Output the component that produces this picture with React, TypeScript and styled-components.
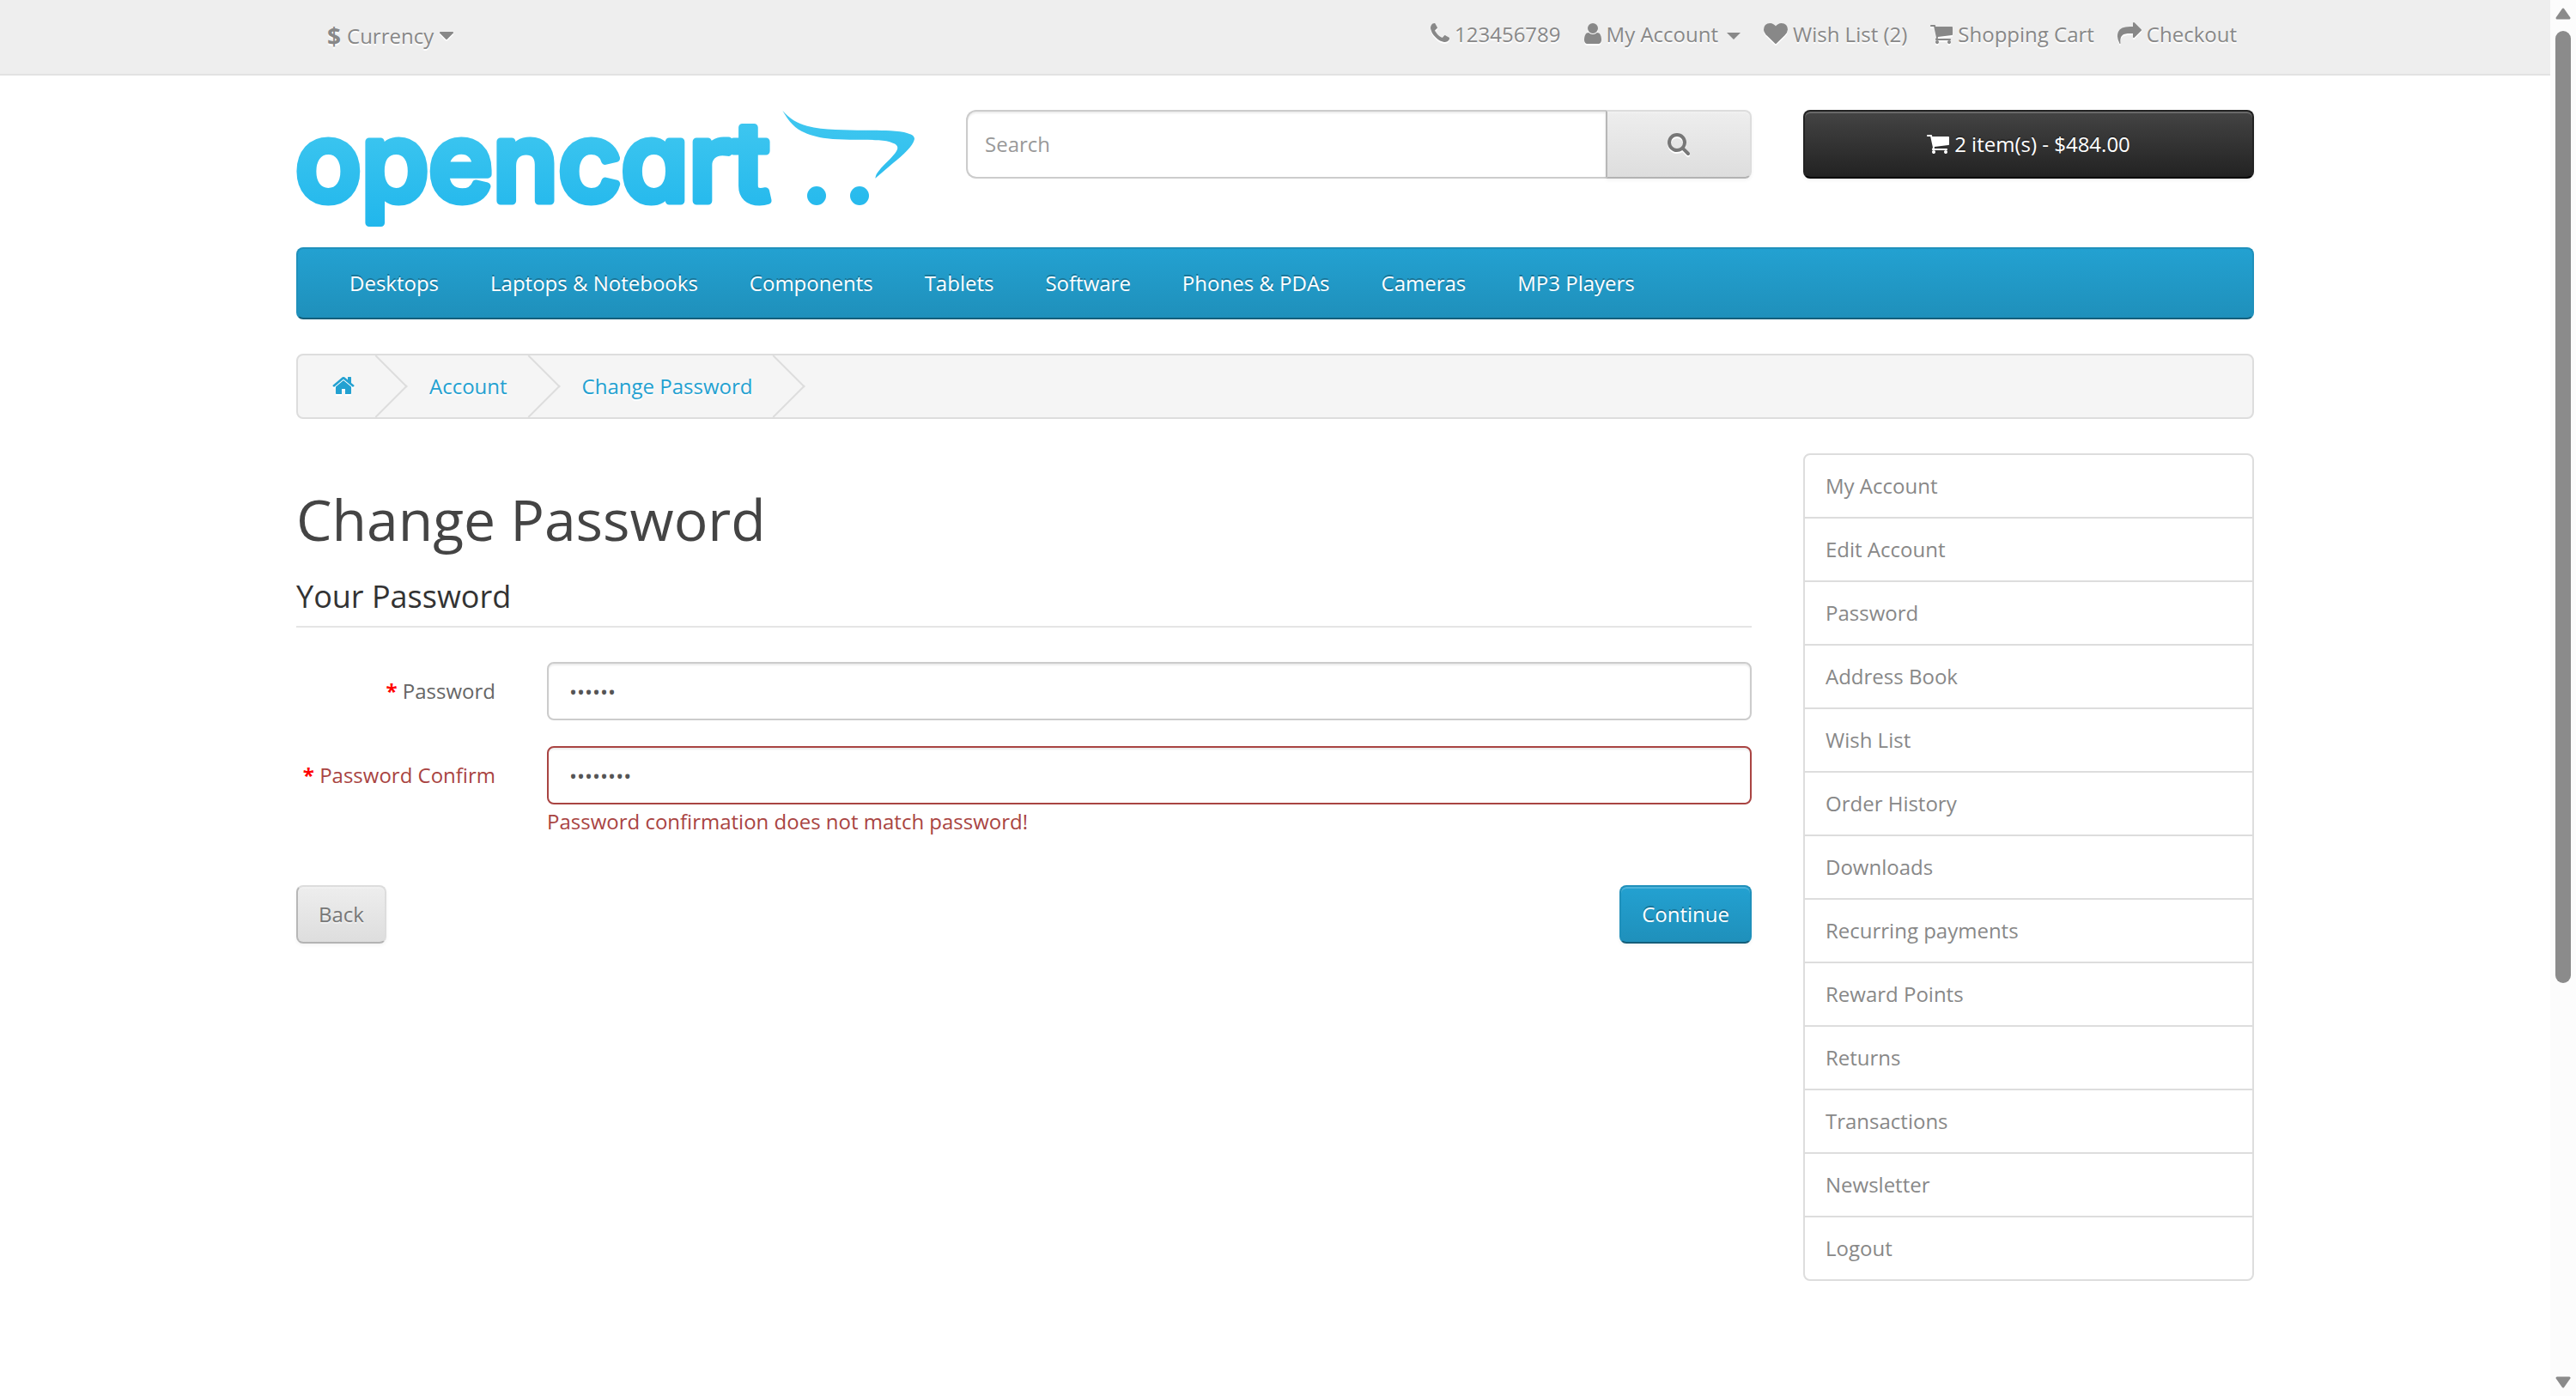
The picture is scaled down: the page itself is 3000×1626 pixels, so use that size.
import React from "react";
import styled, { createGlobalStyle, css } from "styled-components";

const GlobalStyle = createGlobalStyle`
  *, *::before, *::after { box-sizing: border-box; }
  html { background: #fff; }
  body {
    margin: 0;
    font-family: "Open Sans", "Noto Sans", sans-serif;
    font-size: 24px;
    line-height: 40px;
    color: #666;
    background: #fff;
  }
  a { color: inherit; text-decoration: none; }
  ul, ol { list-style: none; margin: 0; padding: 0; }
  button, input { font: inherit; margin: 0; }
`;

/* ---------- icons ---------- */

type Glyph = { x: number; w: number; d: string };

const glyphs: Record<string, Glyph> = {
  phone: {
    x: 192,
    w: 1408,
    d: "M1600 1240q0 27-10 70.5t-21 68.5q-21 50-122 106-94 51-186 51-27 0-52.5-3.5t-57.5-12.5-47.5-14.5-55.5-20.5-49-18q-98-35-175-83-128-79-264.5-215.5t-215.5-264.5q-48-77-83-175-3-9-18-49t-20.5-55.5-14.5-47.5-12.5-57.5-3.5-52.5q0-92 51-186 56-101 106-122 25-11 68.5-21t70.5-10q14 0 21 3 18 6 53 76 11 19 30 54t35 63.5 31 53.5q3 4 17.5 25t21.5 35.5 7 28.5q0 20-28.5 50t-62 55-62 53-28.5 46q0 9 5 22.5t8.5 20.5 14 24 11.5 19q76 137 174 235t235 174q2 1 19 11.5t24 14 20.5 8.5 22.5 5q18 0 46-28.5t53-62 55-62 50-28.5q14 0 28.5 7t35.5 21.5 25 17.5q25 15 53.5 31t63.5 35 54 30q70 35 76 53 3 7 3 21z",
  },
  user: {
    x: 256,
    w: 1280,
    d: "M1536 1399q0 109-62.5 187t-150.5 78h-854q-88 0-150.5-78t-62.5-187q0-85 8.5-160.5t31.5-152 58.5-131 94-89 134.5-34.5q131 128 313 128t313-128q76 0 134.5 34.5t94 89 58.5 131 31.5 152 8.5 160.5zm-256-887q0 159-112.5 271.5t-271.5 112.5-271.5-112.5-112.5-271.5 112.5-271.5 271.5-112.5 271.5 112.5 112.5 271.5z",
  },
  heart: {
    x: 0,
    w: 1792,
    d: "M896 1664q-26 0-44-18l-624-602q-10-8-27.5-26t-55.5-65.5-68-97.5-53.5-121-23.5-138q0-220 127-344t351-124q62 0 126.5 21.5t120 58 95.5 68.5 76 68q36-36 76-68t95.5-68.5 120-58 126.5-21.5q224 0 351 124t127 344q0 221-229 450l-623 600q-18 18-44 18z",
  },
  cart: {
    x: 64,
    w: 1664,
    d: "M704 1536q0 52-38 90t-90 38-90-38-38-90 38-90 90-38 90 38 38 90zm896 0q0 52-38 90t-90 38-90-38-38-90 38-90 90-38 90 38 38 90zm128-1088v512q0 24-16.5 42.5t-40.5 21.5l-1044 122q13 60 13 70 0 16-24 64h920q26 0 45 19t19 45-19 45-45 19h-1024q-26 0-45-19t-19-45q0-11 8-31.5t16-36 21.5-40 15.5-29.5l-177-823h-204q-26 0-45-19t-19-45 19-45 45-19h256q16 0 28.5 6.5t19.5 15.5 13 24.5 8 26 5.5 29.5 4.5 26h1201q26 0 45 19t19 45z",
  },
  share: {
    x: 0,
    w: 1792,
    d: "M1792 640q0 26-19 45l-512 512q-19 19-45 19t-45-19-19-45v-256h-224q-98 0-175.5 6t-154 21.5-133 42.5-105.5 69.5-80 101-48.5 138.5-17.5 181q0 55 5 123 0 6 2.5 23.5t2.5 26.5q0 15-8.5 25t-23.5 10q-16 0-28-17-7-9-13-22t-13.5-30-10.5-24q-127-285-127-451 0-199 53-333 162-403 875-403h224v-256q0-26 19-45t45-19 45 19l512 512q19 19 19 45z",
  },
  search: {
    x: 64,
    w: 1664,
    d: "M1216 832q0-185-131.5-316.5t-316.5-131.5-316.5 131.5-131.5 316.5 131.5 316.5 316.5 131.5 316.5-131.5 131.5-316.5zm512 832q0 52-38 90t-90 38q-54 0-90-38l-343-342q-179 124-399 124-143 0-273.5-55.5t-225-150-150-225-55.5-273.5 55.5-273.5 150-225 225-150 273.5-55.5 273.5 55.5 225 150 150 225 55.5 273.5q0 220-124 399l343 343q37 37 37 90z",
  },
  home: {
    x: 64,
    w: 1664,
    d: "M1472 992v480q0 26-19 45t-45 19h-384v-384h-256v384h-384q-26 0-45-19t-19-45v-480q0-1 .5-3t.5-3l575-474 575 474q1 2 1 6zm223-69l-62 74q-8 9-21 11h-3q-13 0-21-7l-692-577-692 577q-12 8-24 7-13-2-21-11l-62-74q-8-10-7-23.5t11-21.5l719-599q32-26 76-26t76 26l244 204v-195q0-14 9-23t23-9h192q14 0 23 9t9 23v408l219 182q10 8 11 21.5t-7 23.5z",
  },
  caret: {
    x: 384,
    w: 1024,
    d: "M1408 704q0 26-19 45l-448 448q-19 19-45 19t-45-19l-448-448q-19-19-19-45t19-45 45-19h896q26 0 45 19t19 45z",
  },
};

const IconSvg = styled.svg<{ $light?: boolean }>`
  flex: none;
  height: 28px;
  margin-bottom: 2px;
  fill: currentColor;
  overflow: visible;
  filter: ${(p) => (p.$light ? "drop-shadow(0 2px 0 #fff)" : "none")};
`;

function Icon({ name, light }: { name: string; light?: boolean }) {
  const g = glyphs[name];
  return (
    <IconSvg $light={light} viewBox={`${g.x} 0 ${g.w} 1792`} aria-hidden="true">
      <path d={g.d} />
    </IconSvg>
  );
}

/* ---------- layout ---------- */

const Container = styled.div`
  width: 100%;
  max-width: 2340px;
  margin: 0 auto;
  padding: 0 30px;
`;

const Window = styled.div`
  display: grid;
  grid-template-columns: minmax(0, 1fr) 30px;
  height: 100vh;
  overflow: hidden;
`;

const Page = styled.div`
  min-width: 0;
  overflow: hidden;
`;

/* ---------- scrollbar ---------- */

const Track = styled.div`
  display: flex;
  flex-direction: column;
  align-items: center;
  gap: 13px;
  padding: 9px 0;
  background: #fcfcfc;
`;

const Thumb = styled.div`
  flex: 1108 0 0;
  width: 18px;
  border-radius: 9px;
  background: #8b8b8b;
`;

const TrackRest = styled.div`
  flex: 431 0 0;
`;

const Arrow = styled.svg`
  flex: none;
  width: 18px;
  height: 14px;
  fill: #8b8b8b;
  stroke: #8b8b8b;
  stroke-width: 3;
  stroke-linejoin: round;
`;

/* ---------- top bar ---------- */

const TopBar = styled.nav`
  margin-bottom: 40px;
  background: #eee;
  border-bottom: 2px solid #e2e2e2;
  color: #888;
  text-shadow: 0 2px 0 #fff;
`;

const TopInner = styled(Container)`
  display: flex;
  justify-content: space-between;
  height: 86px;
`;

const CurrencyButton = styled.button`
  display: flex;
  align-items: center;
  gap: 7px;
  height: 84px;
  padding: 0 36px;
  border: 0;
  background: none;
  color: inherit;
  text-shadow: inherit;

  strong { font-size: 28px; }
`;

const TopLinks = styled.ul`
  display: flex;
  align-items: center;
  gap: 27px;
  height: 80px;
  padding-right: 20px;
`;

const TopLink = styled.a`
  display: flex;
  align-items: center;
  gap: 6px;
`;

const Caret = styled.span`
  width: 16px;
  height: 8px;
  margin: 4px 0 0 4px;
  border: 8px solid transparent;
  border-top-color: currentColor;
  border-bottom: 0;
`;

/* ---------- header ---------- */

const Header = styled(Container)`
  display: grid;
  grid-template-columns: 720fr 915fr 525fr;
  column-gap: 60px;
  align-items: start;
`;

const Logo = styled.svg`
  display: block;
  width: 100%;
  margin-bottom: 20px;
  overflow: visible;
`;

const Wordmark = styled.text`
  font-family: "Inter", "Open Sans", sans-serif;
  font-size: 127px;
  font-weight: 500;
  font-feature-settings: "cv11";
  stroke-width: 9px;
  stroke-linejoin: round;
`;

const SearchForm = styled.form`
  display: flex;
  height: 80px;
`;

const SearchInput = styled.input`
  flex: 1;
  min-width: 0;
  padding: 0 20px;
  border: 2px solid #ccc;
  border-radius: 12px 0 0 12px;
  border-right: 0;
  background: #fff;
  color: #555;
  box-shadow: inset 0 2px 2px rgba(0, 0, 0, 0.075);

  &::placeholder { color: #999; opacity: 1; }
`;

const greyButton = css`
  color: #777;
  text-shadow: 0 2px 0 rgba(255, 255, 255, 0.5);
  background: linear-gradient(to bottom, #eeeeee, #dddddd) border-box;
  border: 2px solid;
  border-color: #dddddd #dddddd #b3b3b3 #b7b7b7;
  box-shadow: inset 0 2px 0 rgba(255, 255, 255, 0.2), 0 2px 4px rgba(0, 0, 0, 0.05);
`;

const SearchButton = styled.button`
  ${greyButton}
  display: flex;
  align-items: center;
  justify-content: center;
  width: 170px;
  border-radius: 0 8px 8px 0;
`;

const CartButton = styled.button`
  display: flex;
  align-items: center;
  justify-content: center;
  gap: 6px;
  height: 80px;
  color: #fff;
  text-shadow: 0 -2px 0 rgba(0, 0, 0, 0.25);
  background: linear-gradient(to bottom, #444444, #222222);
  border: 2px solid;
  border-color: #222222 #222222 #000000;
  border-radius: 8px;
  box-shadow: inset 0 2px 0 rgba(255, 255, 255, 0.2), 0 2px 4px rgba(0, 0, 0, 0.05);
`;

/* ---------- menu and breadcrumb ---------- */

const Menu = styled.nav`
  height: 84px;
  margin-bottom: 40px;
  padding: 0 32px;
  border: 2px solid;
  border-color: #1f90bb #1f90bb #145e7a;
  border-radius: 8px;
  background: linear-gradient(to bottom, #23a1d1, #1f90bb);
  color: #fff;
  text-shadow: 0 -2px 0 rgba(0, 0, 0, 0.25);

  ul { display: flex; }
  a { display: block; padding: 20px 28px; }
  li + li { margin-left: 4px; }
`;

const Breadcrumb = styled.ol`
  display: flex;
  gap: 6px;
  height: 76px;
  margin-bottom: 40px;
  overflow: hidden;
  border: 2px solid #ddd;
  border-radius: 8px;
  background: #f5f5f5;
  color: #23a1d1;
  text-shadow: 0 2px 0 #fff;
`;

const Crumb = styled.li`
  position: relative;
  display: flex;
  align-items: center;
  padding: 0 41px 0 40px;

  &::after {
    content: "";
    position: absolute;
    top: 10px;
    right: -10px;
    width: 52px;
    height: 52px;
    border: solid #ddd;
    border-width: 0 2px 2px 0;
    transform: rotate(-45deg);
  }
  a { display: flex; }
`;

/* ---------- content ---------- */

const Columns = styled.div`
  display: grid;
  grid-template-columns: 1695fr 525fr;
  column-gap: 60px;
  align-items: start;
`;

const Title = styled.h1`
  margin: 40px 0 20px;
  font-size: 66px;
  font-weight: 400;
  line-height: 73px;
  color: #444;
`;

const Fieldset = styled.fieldset`
  min-width: 0;
  margin: 0;
  padding: 0;
  border: 0;
`;

const Legend = styled.legend`
  display: block;
  width: 100%;
  margin-bottom: 40px;
  padding: 14px 0;
  border-bottom: 2px solid #e5e5e5;
  font-size: 36px;
  line-height: 40px;
  color: #333;
`;

const Row = styled.div<{ $error?: boolean }>`
  display: grid;
  grid-template-columns: 232px minmax(0, 1fr);
  column-gap: 60px;
  margin-bottom: 30px;
  color: ${(p) => (p.$error ? "#a94442" : "#666")};
`;

const Label = styled.label`
  padding-top: 14px;
  text-align: right;
  white-space: nowrap;

  &::before {
    content: "* ";
    color: #f00;
    font-weight: 700;
  }
`;

const PasswordInput = styled.input<{ $error?: boolean }>`
  display: block;
  width: 100%;
  height: 68px;
  padding: 0 24px;
  border: 2px solid ${(p) => (p.$error ? "#a94442" : "#ccc")};
  border-radius: 8px;
  background: #fff;
  color: #555;
  box-shadow: inset 0 2px 2px rgba(0, 0, 0, 0.075);
`;

const ErrorText = styled.div`
  color: #a94442;
`;

const Buttons = styled.div`
  display: flex;
  justify-content: space-between;
  margin: 54px 0 40px;
`;

const BackLink = styled.a`
  ${greyButton}
  height: 68px;
  padding: 12px 24px;
  border-radius: 8px;
`;

const ContinueButton = styled.button`
  height: 68px;
  padding: 0 24px;
  color: #fff;
  text-shadow: 0 -2px 0 rgba(0, 0, 0, 0.25);
  background: linear-gradient(to bottom, #23a1d1, #1f90bb);
  border: 2px solid;
  border-color: #1f90bb #1f90bb #145e7a;
  border-radius: 8px;
  box-shadow: inset 0 2px 0 rgba(255, 255, 255, 0.2), 0 2px 4px rgba(0, 0, 0, 0.05);
`;

const Form = styled.form`
  ${Row}:last-child { margin-bottom: 0; }
`;

const SideList = styled.ul`
  border: 2px solid #ddd;
  border-radius: 8px;
  color: #888;

  li + li { border-top: 2px solid #ddd; }
  a { display: block; padding: 16px 24px; }
`;

const menuItems = [
  "Desktops",
  "Laptops & Notebooks",
  "Components",
  "Tablets",
  "Software",
  "Phones & PDAs",
  "Cameras",
  "MP3 Players",
];

const sideItems = [
  "My Account",
  "Edit Account",
  "Password",
  "Address Book",
  "Wish List",
  "Order History",
  "Downloads",
  "Recurring payments",
  "Reward Points",
  "Returns",
  "Transactions",
  "Newsletter",
  "Logout",
];

const topItems = [
  { icon: "phone", label: "123456789" },
  { icon: "user", label: "My Account", caret: true },
  { icon: "heart", label: "Wish List (2)" },
  { icon: "cart", label: "Shopping Cart" },
  { icon: "share", label: "Checkout" },
];

export default function App() {
  return (
    <>
      <GlobalStyle />
      <Window>
        <Page>
          <TopBar>
            <TopInner>
              <CurrencyButton type="button">
                <strong>$</strong>
                <span>Currency</span>
                <Icon name="caret" light />
              </CurrencyButton>
              <TopLinks>
                {topItems.map((t) => (
                  <li key={t.label}>
                    <TopLink href="#">
                      <Icon name={t.icon} light />
                      <span>{t.label}</span>
                      {t.caret && <Caret />}
                    </TopLink>
                  </li>
                ))}
              </TopLinks>
            </TopInner>
          </TopBar>

          <Header as="header">
            <a href="#" aria-label="opencart">
              <Logo viewBox="0 0 720 140">
                <defs>
                  <linearGradient id="sky" gradientUnits="userSpaceOnUse" x1="0" y1="0" x2="0" y2="140">
                    <stop offset="0" stopColor="#41c8f0" />
                    <stop offset="1" stopColor="#20b6ec" />
                  </linearGradient>
                </defs>
                <Wordmark x="-1" y="106" fill="url(#sky)" stroke="url(#sky)">
                  opencart
                </Wordmark>
                <g fill="url(#sky)">
                  <path d="M566.3 0.7C574 10 584 16 595 18.7C605 21.5 616 22.6 628 23C640 23.6 650 23.7 662 23.7C673 23.7 682 23.7 692 24.3C700 24.9 707 25.5 712 27.3C718 29 720 31 720 34C719 38 716 43 711.7 47C706 53 701 57 695 62L674.3 79.7C675 76 676 74 678.3 71.3C682 66 687 62 691.7 57C696 52 700.3 48 700.3 44C700 41 698 39.8 695 38.7C690 36.5 685 35.7 678.3 35.3C667 34.5 656 34.9 645 34.7C636 34.6 627 34.3 618.3 33.3C606 31.8 597 29 588.3 24.7C583 22 579 18.5 575 13.7C571 9 569 5 566.3 0.7Z" />
                  <circle cx="606" cy="100" r="11" />
                  <circle cx="656" cy="100" r="11" />
                </g>
              </Logo>
            </a>
            <SearchForm>
              <SearchInput type="text" placeholder="Search" aria-label="Search" />
              <SearchButton type="button" aria-label="Search">
                <Icon name="search" light />
              </SearchButton>
            </SearchForm>
            <CartButton type="button">
              <Icon name="cart" />
              <span>2 item(s) - $484.00</span>
            </CartButton>
          </Header>

          <Container>
            <Menu>
              <ul>
                {menuItems.map((m) => (
                  <li key={m}>
                    <a href="#">{m}</a>
                  </li>
                ))}
              </ul>
            </Menu>

            <Breadcrumb>
              <Crumb>
                <a href="#" aria-label="Home">
                  <Icon name="home" light />
                </a>
              </Crumb>
              <Crumb>
                <a href="#">Account</a>
              </Crumb>
              <Crumb>
                <a href="#">Change Password</a>
              </Crumb>
            </Breadcrumb>

            <Columns>
              <main>
                <Title>Change Password</Title>
                <Form>
                  <Fieldset>
                    <Legend>Your Password</Legend>
                    <Row>
                      <Label htmlFor="password">Password</Label>
                      <PasswordInput id="password" type="password" defaultValue="secret" />
                    </Row>
                    <Row $error>
                      <Label htmlFor="confirm">Password Confirm</Label>
                      <div>
                        <PasswordInput $error id="confirm" type="password" defaultValue="password" />
                        <ErrorText>Password confirmation does not match password!</ErrorText>
                      </div>
                    </Row>
                  </Fieldset>
                  <Buttons>
                    <BackLink href="#">Back</BackLink>
                    <ContinueButton type="button">Continue</ContinueButton>
                  </Buttons>
                </Form>
              </main>
              <aside>
                <SideList>
                  {sideItems.map((s) => (
                    <li key={s}>
                      <a href="#">{s}</a>
                    </li>
                  ))}
                </SideList>
              </aside>
            </Columns>
          </Container>
        </Page>
        <Track aria-hidden="true">
          <Arrow viewBox="0 0 18 14">
            <path d="M9 2L16 12H2Z" />
          </Arrow>
          <Thumb />
          <TrackRest />
          <Arrow viewBox="0 0 18 14">
            <path d="M9 12L16 2H2Z" />
          </Arrow>
        </Track>
      </Window>
    </>
  );
}
